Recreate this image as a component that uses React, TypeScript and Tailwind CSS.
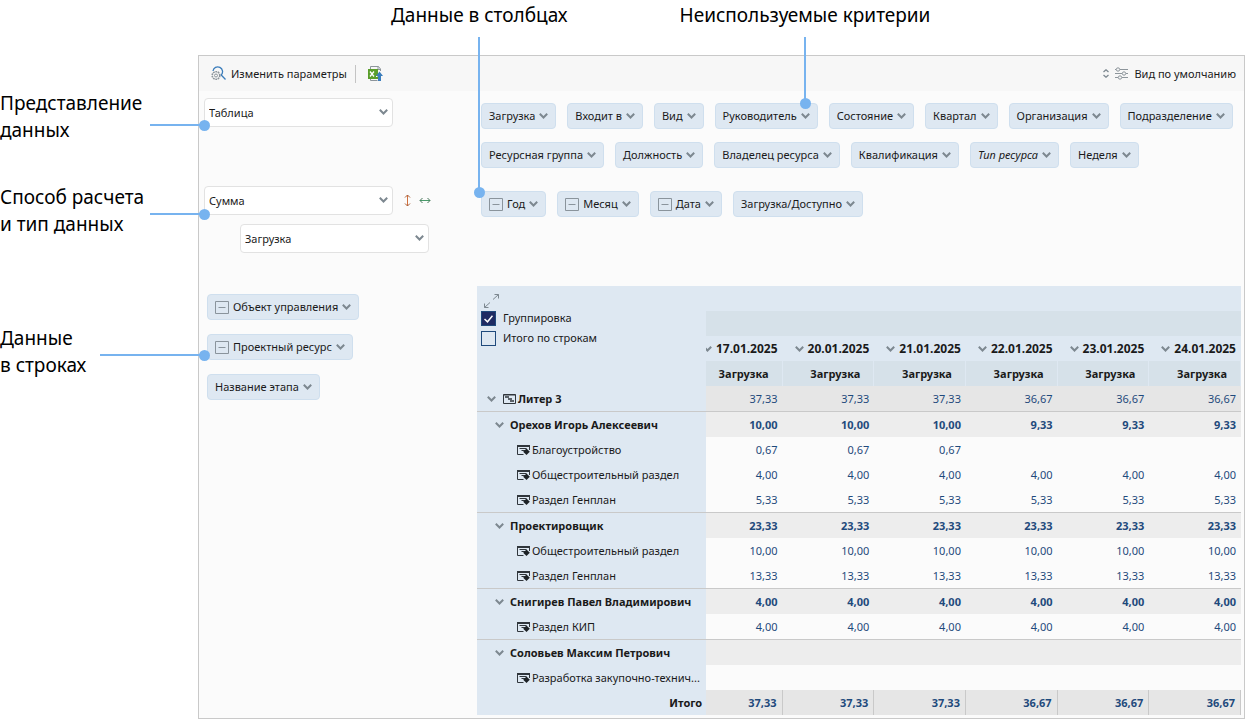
import { Fragment, type ReactNode } from 'react';

type Chip = { label: string; grouped?: boolean; italic?: boolean };

const unusedCriteria: Chip[][] = [
  [
    { label: 'Загрузка' },
    { label: 'Входит в' },
    { label: 'Вид' },
    { label: 'Руководитель' },
    { label: 'Состояние' },
    { label: 'Квартал' },
    { label: 'Организация' },
    { label: 'Подразделение' },
  ],
  [
    { label: 'Ресурсная группа' },
    { label: 'Должность' },
    { label: 'Владелец ресурса' },
    { label: 'Квалификация' },
    { label: 'Тип ресурса', italic: true },
    { label: 'Неделя' },
  ],
];

const columnCriteria: Chip[] = [
  { label: 'Год', grouped: true },
  { label: 'Месяц', grouped: true },
  { label: 'Дата', grouped: true },
  { label: 'Загрузка/Доступно' },
];

const rowCriteria: Chip[] = [
  { label: 'Объект управления', grouped: true },
  { label: 'Проектный ресурс', grouped: true },
  { label: 'Название этапа' },
];

const dates = ['17.01.2025', '20.01.2025', '21.01.2025', '22.01.2025', '23.01.2025', '24.01.2025'];

const groups = [
  {
    name: 'Орехов Игорь Алексеевич',
    values: ['10,00', '10,00', '10,00', '9,33', '9,33', '9,33'],
    stages: [
      { name: 'Благоустройство', values: ['0,67', '0,67', '0,67', '', '', ''] },
      { name: 'Общестроительный раздел', values: ['4,00', '4,00', '4,00', '4,00', '4,00', '4,00'] },
      { name: 'Раздел Генплан', values: ['5,33', '5,33', '5,33', '5,33', '5,33', '5,33'] },
    ],
  },
  {
    name: 'Проектировщик',
    values: ['23,33', '23,33', '23,33', '23,33', '23,33', '23,33'],
    stages: [
      { name: 'Общестроительный раздел', values: ['10,00', '10,00', '10,00', '10,00', '10,00', '10,00'] },
      { name: 'Раздел Генплан', values: ['13,33', '13,33', '13,33', '13,33', '13,33', '13,33'] },
    ],
  },
  {
    name: 'Снигирев Павел Владимирович',
    values: ['4,00', '4,00', '4,00', '4,00', '4,00', '4,00'],
    stages: [{ name: 'Раздел КИП', values: ['4,00', '4,00', '4,00', '4,00', '4,00', '4,00'] }],
  },
  {
    name: 'Соловьев Максим Петрович',
    values: ['', '', '', '', '', ''],
    stages: [{ name: 'Разработка закупочно-технич...', values: ['', '', '', '', '', ''] }],
  },
];

const projectValues = ['37,33', '37,33', '37,33', '36,67', '36,67', '36,67'];

function Chevron() {
  return (
    <svg className="shrink-0" width="9" height="6" viewBox="0 0 9 6" fill="none" stroke="#7d8890" strokeWidth="2">
      <path d="M0.8 0.8 4.5 4.5 8.2 0.8" />
    </svg>
  );
}

function ProjectIcon() {
  return (
    <svg className="shrink-0" width="13" height="10" viewBox="0 0 13 10" fill="none" stroke="#30363c">
      <path d="M0.5 0.5h12v9H0.5zM0.5 1h12" />
      <path d="M2 3h4M5 5h4M7 7h4" strokeWidth="1.6" />
    </svg>
  );
}

function StageIcon() {
  return (
    <svg className="shrink-0" width="13" height="10" viewBox="0 0 13 10" fill="none" stroke="#30363c">
      <path d="M0.5 1v8.500H6.500M12.500 1v4" />
      <path d="M0 1h13" strokeWidth="2" />
      <path d="M2.500 3.500h7M4.500 5.500h4" />
      <path d="M9.500 3.500 12.800 6.800 9.500 10 6.200 6.800z" fill="#1d2226" stroke="none" />
    </svg>
  );
}

function CriteriaChip({ label, grouped, italic }: Chip) {
  return (
    <button
      type="button"
      className="flex h-[26px] items-center gap-1 rounded border border-[#cfdfee] bg-[#dee8f2] px-[7px] whitespace-nowrap"
    >
      {grouped && (
        <svg className="shrink-0" width="14" height="13" viewBox="0 0 14 13" fill="none" stroke="#8a949c">
          <path d="M0.5 0.5h13v12h-13zM3.500 6.500h7" />
        </svg>
      )}
      <span className={italic ? 'italic' : ''}>{label}</span>
      <Chevron />
    </button>
  );
}

function SelectBox({ label, options }: { label: string; options: string[] }) {
  return (
    <div className="relative w-[189px]">
      <select
        aria-label={label}
        className="block h-[29px] w-full appearance-none rounded border border-[#e2e2e2] bg-white px-1 text-[#1a1a1a]"
      >
        {options.map((option) => (
          <option key={option}>{option}</option>
        ))}
      </select>
      <span className="pointer-events-none absolute top-[11px] right-[5px]">
        <Chevron />
      </span>
    </div>
  );
}

function TopCallout({ children, short }: { children: ReactNode; short?: boolean }) {
  return (
    <div className="relative">
      {children}
      <span className={`absolute top-[35px] left-1/2 z-10 -ml-px w-0.5 bg-[#77b3ef] ${short ? 'h-[67px]' : 'h-[156px]'}`}>
        <span className="absolute -bottom-[5px] -left-1 size-[11px] rounded-full bg-[#77b3ef]" />
      </span>
    </div>
  );
}

function SideCallout({ children, line }: { children: ReactNode; line: string }) {
  return (
    <div className="relative">
      {children}
      <span className={`absolute -right-[7px] z-10 h-0.5 bg-[#77b3ef] ${line}`}>
        <span className="absolute -top-1 -right-[5px] size-[11px] rounded-full bg-[#77b3ef]" />
      </span>
    </div>
  );
}

function PivotTable() {
  return (
    <table className="w-full table-fixed border-separate border-spacing-0 text-[#1a1a1a]">
      <colgroup>
        <col className="w-[30%]" />
        <col className="w-[10%]" />
        <col className="w-[12%]" />
        <col className="w-[12%]" />
        <col className="w-[12%]" />
        <col className="w-[12%]" />
        <col className="w-[12%]" />
      </colgroup>
      <thead className="bg-[#dee8f2]">
        <tr className="h-[25px]">
          <td rowSpan={4} className="p-0 px-1 pt-2 align-top">
            <svg width="15" height="14" viewBox="0 0 15 14" fill="none" stroke="#7d8890" className="ml-[3px]">
              <path d="M10.500 0.500h4v4M14.500 0.500 9 5.500M4.500 13.500h-4v-4M0.500 13.500 6 8.500" />
            </svg>
            <label className="flex h-5 items-center gap-[7px]">
              <span className="relative flex">
                <input
                  type="checkbox"
                  defaultChecked
                  className="size-[15px] appearance-none border border-[#1f4a7c] bg-transparent checked:bg-[#1f2b63]"
                />
                <svg className="pointer-events-none absolute top-1 left-[3px]" width="9" height="8" viewBox="0 0 9 8" fill="none" stroke="white" strokeWidth="1.500">
                  <path d="M0.500 4 3.500 6.800 8.500 0.800" />
                </svg>
              </span>
              Группировка
            </label>
            <label className="flex h-5 items-center gap-[7px]">
              <input type="checkbox" className="size-[15px] appearance-none border border-[#1f4a7c] bg-transparent" />
              Итого по строкам
            </label>
          </td>
          <td colSpan={6} className="p-0" />
        </tr>
        <tr className="h-[25px]">
          <td colSpan={6} className="bg-[#d6e1e9] p-0" />
        </tr>
        <tr className="h-[25px]">
          {dates.map((date) => (
            <th key={date} className="overflow-hidden p-0 pr-[5px] text-[12px] font-bold">
              <div className="flex items-center justify-end gap-1">
                <Chevron />
                {date}
              </div>
            </th>
          ))}
        </tr>
        <tr className="h-[25px]">
          {dates.map((date) => (
            <th key={date} className="border-r border-[#dee8f2] bg-[#d6e1e9] p-0 pr-[13px] text-right font-bold">
              Загрузка
            </th>
          ))}
        </tr>
      </thead>
      <tbody className="text-right text-[#1f4a7c]">
        <tr className="h-[25px]">
          <th className="bg-[#dee8f2] p-0 pl-[10px] font-bold text-[#1a1a1a]">
            <div className="flex items-center">
              <Chevron />
              <span className="ml-[7px] flex items-center gap-0.5">
                <ProjectIcon />
                Литер 3
              </span>
            </div>
          </th>
          {projectValues.map((value, i) => (
            <td key={i} className="bg-[#e6e6e6] p-0 pr-[5px]">
              {value}
            </td>
          ))}
        </tr>
        {groups.map((group) => (
          <Fragment key={group.name}>
            <tr className="h-[26px] font-bold">
              <th className="border-t border-[#c9c9c9] bg-[#dee8f2] p-0 pl-[18px] text-[#1a1a1a]">
                <div className="flex items-center gap-1.5">
                  <Chevron />
                  {group.name}
                </div>
              </th>
              {group.values.map((value, i) => (
                <td key={i} className="border-t border-[#c9c9c9] bg-[#ededed] p-0 pr-[5px]">
                  {value}
                </td>
              ))}
            </tr>
            {group.stages.map((stage) => (
              <tr key={stage.name} className="h-[25px]">
                <th className="bg-[#dee8f2] p-0 pl-10 text-left font-normal text-[#1a1a1a]">
                  <div className="flex items-center gap-0.5 whitespace-nowrap">
                    <StageIcon />
                    {stage.name}
                  </div>
                </th>
                {stage.values.map((value, i) => (
                  <td key={i} className="p-0 pr-[5px]">
                    {value}
                  </td>
                ))}
              </tr>
            ))}
          </Fragment>
        ))}
      </tbody>
      <tfoot className="text-right font-bold">
        <tr className="h-[25px]">
          <th className="bg-[#dee8f2] p-0 pr-1 text-right">Итого</th>
          {projectValues.map((value, i) => (
            <td key={i} className="border-r border-[#c9c9c9] bg-[#e6e6e6] p-0 pr-[5px] text-[#1f4a7c]">
              {value}
            </td>
          ))}
        </tr>
      </tfoot>
    </table>
  );
}

export default function App() {
  return (
    <div className="bg-white font-['Noto_Sans',sans-serif] text-[11px] leading-4 text-[#1a1a1a]">
      <header className="flex h-[55px] gap-[112px] pt-0.5 pl-[391px] text-[19px] leading-[27px] text-black">
        <TopCallout>Данные в столбцах</TopCallout>
        <TopCallout short>Неиспользуемые критерии</TopCallout>
      </header>

      <div className="flex">
        <aside className="w-[198px] shrink-0 pt-[35px] text-[19px] leading-[27px] text-black">
          <SideCallout line="top-[34px] w-[55px]">
            Представление
            <br />
            данных
          </SideCallout>
          <div className="mt-10">
            <SideCallout line="top-[29px] w-[55px]">
              Способ расчета
              <br />
              и тип данных
            </SideCallout>
          </div>
          <div className="mt-[87px]">
            <SideCallout line="top-[29px] w-[105px]">
              Данные
              <br />
              в строках
            </SideCallout>
          </div>
        </aside>

        <main className="min-w-0 grow border border-[#c9c9c9] bg-[#fbfbfb]">
          <div className="flex h-[35px] items-center justify-between bg-[#f7f7f7] pr-2 pl-3">
            <div className="flex items-center">
              <button type="button" className="flex items-center gap-[5px]">
                <svg width="15" height="15" viewBox="0 0 15 15" fill="none">
                  <path d="M2 5a4.800 4.800 0 1 1 8.200 4L14.500 13.500" stroke="#3b7dbb" strokeWidth="1.300" />
                  <circle cx="5" cy="9.500" r="3.800" stroke="#8d959b" strokeWidth="1.600" strokeDasharray="1.700 0.700" />
                  <circle cx="5" cy="9.500" r="1.500" stroke="#8d959b" />
                </svg>
                Изменить параметры
              </button>
              <span className="mx-2 h-[18px] w-px bg-[#c4c4c4]" />
              <button type="button" aria-label="Экспорт в Excel" className="ml-1">
                <svg width="15" height="16" viewBox="0 0 15 16" fill="none">
                  <path d="M2.500 3v-2.500h8l2 2.500v2M2.500 13v1.500h7M10 0.500v3h2.500" stroke="#8d959b" />
                  <path d="M0 3h10v10H0z" fill="#5a9e2b" />
                  <path d="M2 5.500l4 5M6 5.500l-4 5" stroke="white" strokeWidth="1.300" />
                  <path d="M8 10.500h1.500" stroke="white" />
                  <path d="M11.500 5.500 15 10h-2v5h-3v-5H8z" fill="#3b7dbb" />
                </svg>
              </button>
            </div>
            <button type="button" className="flex items-center">
              <svg width="6" height="9" viewBox="0 0 6 9" fill="none" stroke="#7d8890" strokeWidth="1.300">
                <path d="M0.500 3 3 0.800 5.500 3M0.500 6 3 8.200 5.500 6" />
              </svg>
              <svg className="mr-1.5 ml-1.5" width="13" height="13" viewBox="0 0 13 13" fill="none" stroke="#8d959b">
                <path d="M0 2.500h1M5 2.500h8M0 6.500h7M11 6.500h2M0 10.500h3M7 10.500h6" />
                <circle cx="3" cy="2.500" r="1.700" />
                <circle cx="9" cy="6.500" r="1.700" />
                <circle cx="5" cy="10.500" r="1.700" />
              </svg>
              Вид по умолчанию
            </button>
          </div>

          <div className="grid grid-cols-[278px_1fr] grid-rows-[195px_auto] pr-[3px] pb-[3px]">
            <section className="pt-[7px] pl-[5px]">
              <SelectBox label="Представление данных" options={['Таблица', 'Диаграмма']} />
              <div className="mt-[59px] flex items-center">
                <SelectBox label="Способ расчета" options={['Сумма', 'Среднее']} />
                <svg className="ml-[11px]" width="7" height="13" viewBox="0 0 7 13" fill="none">
                  <path d="M3.500 1v11" stroke="#d0703c" />
                  <path d="M1 3.500 3.500 1 6 3.500M1 9.500 3.500 12 6 9.500" stroke="#a8603c" />
                </svg>
                <svg className="ml-2" width="12" height="7" viewBox="0 0 12 7" fill="none">
                  <path d="M1 3.500h10" stroke="#4a9a6a" />
                  <path d="M3.500 1 1 3.500 3.500 6M8.500 1 11 3.500 8.500 6" stroke="#47775a" />
                </svg>
              </div>
              <div className="mt-[9px] ml-9">
                <SelectBox label="Тип данных" options={['Загрузка', 'Доступно']} />
              </div>
            </section>

            <section className="pt-3 pl-1">
              <div className="space-y-[13px]">
                {unusedCriteria.map((row, i) => (
                  <div key={i} className="flex gap-[11px]">
                    {row.map((chip) => (
                      <CriteriaChip key={chip.label} {...chip} />
                    ))}
                  </div>
                ))}
              </div>
              <div className="mt-[23px] flex gap-[11px]">
                {columnCriteria.map((chip) => (
                  <CriteriaChip key={chip.label} {...chip} />
                ))}
              </div>
            </section>

            <section className="flex flex-col items-start gap-[14px] pt-2 pl-2">
              {rowCriteria.map((chip) => (
                <CriteriaChip key={chip.label} {...chip} />
              ))}
            </section>

            <PivotTable />
          </div>
        </main>
      </div>
    </div>
  );
}
